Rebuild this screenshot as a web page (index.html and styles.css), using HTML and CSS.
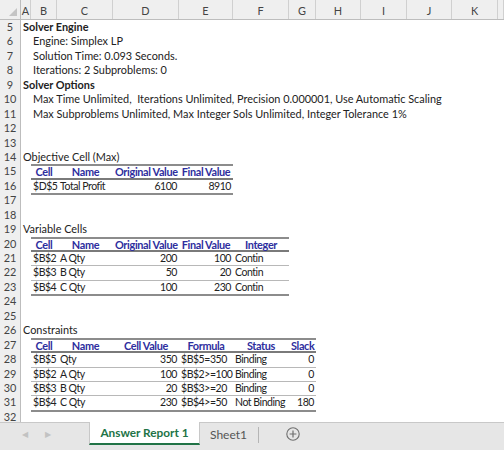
FILE: index.html
```html
<!DOCTYPE html>
<html lang="en">
<head>
  <meta charset="UTF-8">
  <title>Answer Report 1</title>
  <link rel="stylesheet" href="styles.css">
</head>
<body>
  <div class="book">
    <div class="sheet">
      <div class="cols">
        <div class="corner"><span class="tri"></span></div>
        <div class="ch">A</div><div class="ch">B</div><div class="ch">C</div><div class="ch">D</div>
        <div class="ch">E</div><div class="ch">F</div><div class="ch">G</div><div class="ch">H</div>
        <div class="ch">I</div><div class="ch">J</div><div class="ch">K</div><div class="ch"></div>
      </div>

      <div class="row"><div class="rh">5</div><div class="c ca b">Solver Engine</div></div>
      <div class="row"><div class="rh">6</div><div class="c cb">Engine: Simplex LP</div></div>
      <div class="row"><div class="rh">7</div><div class="c cb">Solution Time: 0.093 Seconds.</div></div>
      <div class="row"><div class="rh">8</div><div class="c cb">Iterations: 2 Subproblems: 0</div></div>
      <div class="row"><div class="rh">9</div><div class="c ca b">Solver Options</div></div>
      <div class="row"><div class="rh">10</div><div class="c cb">Max Time Unlimited,  Iterations Unlimited, Precision 0.000001, Use Automatic Scaling</div></div>
      <div class="row"><div class="rh">11</div><div class="c cb">Max Subproblems Unlimited, Max Integer Sols Unlimited, Integer Tolerance 1%</div></div>
      <div class="row"><div class="rh">12</div></div>
      <div class="row"><div class="rh">13</div></div>
      <div class="row"><div class="rh">14</div><div class="c ca">Objective Cell (Max)</div></div>

      <!-- objective table: B..E -->
      <div class="row"><div class="rh">15</div>
        <div class="t th top k2">Cell</div><div class="t th top k3">Name</div>
        <div class="t th top k4">Original Value</div><div class="t th top k5">Final Value</div>
      </div>
      <div class="row"><div class="rh">16</div>
        <div class="t last k2">$D$5</div><div class="t last k3 clip">Total Profit</div>
        <div class="t last k4 num">6100</div><div class="t last k5 num">8910</div>
      </div>

      <div class="row"><div class="rh">17</div></div>
      <div class="row"><div class="rh">18</div></div>
      <div class="row"><div class="rh">19</div><div class="c ca">Variable Cells</div></div>

      <!-- variable cells: B..F -->
      <div class="row"><div class="rh">20</div>
        <div class="t th top k2">Cell</div><div class="t th top k3">Name</div>
        <div class="t th top k4">Original Value</div><div class="t th top k5">Final Value</div>
        <div class="t th top k6">Integer</div>
      </div>
      <div class="row"><div class="rh">21</div>
        <div class="t k2">$B$2</div><div class="t k3">A Qty</div>
        <div class="t k4 num">200</div><div class="t k5 num">100</div><div class="t k6">Contin</div>
      </div>
      <div class="row"><div class="rh">22</div>
        <div class="t k2">$B$3</div><div class="t k3">B Qty</div>
        <div class="t k4 num">50</div><div class="t k5 num">20</div><div class="t k6">Contin</div>
      </div>
      <div class="row"><div class="rh">23</div>
        <div class="t last k2">$B$4</div><div class="t last k3">C Qty</div>
        <div class="t last k4 num">100</div><div class="t last k5 num">230</div><div class="t last k6">Contin</div>
      </div>

      <div class="row"><div class="rh">24</div></div>
      <div class="row"><div class="rh">25</div></div>
      <div class="row"><div class="rh">26</div><div class="c ca">Constraints</div></div>

      <!-- constraints: B..G -->
      <div class="row"><div class="rh">27</div>
        <div class="t th top k2">Cell</div><div class="t th top k3">Name</div>
        <div class="t th top k4">Cell Value</div><div class="t th top k5">Formula</div>
        <div class="t th top k6">Status</div><div class="t th top k7 num">Slack</div>
      </div>
      <div class="row"><div class="rh">28</div>
        <div class="t k2">$B$5</div><div class="t k3">Qty</div>
        <div class="t k4 num">350</div><div class="t k5">$B$5=350</div>
        <div class="t k6">Binding</div><div class="t k7 num">0</div>
      </div>
      <div class="row"><div class="rh">29</div>
        <div class="t k2">$B$2</div><div class="t k3">A Qty</div>
        <div class="t k4 num">100</div><div class="t k5">$B$2&gt;=100</div>
        <div class="t k6">Binding</div><div class="t k7 num">0</div>
      </div>
      <div class="row"><div class="rh">30</div>
        <div class="t k2">$B$3</div><div class="t k3">B Qty</div>
        <div class="t k4 num">20</div><div class="t k5">$B$3&gt;=20</div>
        <div class="t k6">Binding</div><div class="t k7 num">0</div>
      </div>
      <div class="row"><div class="rh">31</div>
        <div class="t last k2">$B$4</div><div class="t last k3">C Qty</div>
        <div class="t last k4 num">230</div><div class="t last k5">$B$4&gt;=50</div>
        <div class="t last k6 clip">Not Binding</div><div class="t last k7 num">180</div>
      </div>

      <div class="row"><div class="rh">32</div></div>
    </div>

    <div class="tabs">
      <div class="nav">
        <span class="arrow">&#9664;</span>
        <span class="arrow">&#9654;</span>
      </div>
      <div class="tab active">Answer Report 1</div>
      <div class="tab">Sheet1</div>
      <div class="sep"></div>
      <div class="add">
        <svg width="14" height="14" viewBox="0 0 14 14">
          <circle cx="7" cy="7" r="6.2" fill="none" stroke="#6f6f6f" stroke-width="1.1"/>
          <path d="M7 3.6v6.8M3.6 7h6.8" stroke="#6f6f6f" stroke-width="1.2"/>
        </svg>
      </div>
    </div>
  </div>
</body>
</html>
```

FILE: styles.css
```css
:root {
  --cols: 21px 10px 26px 56px 66px 54px 56px 27px 45px 46px 45px 46px 1fr;
  --row-h: 14.44px;
  --head-bg: #efefef;
  --head-line: #d0d0d0;
  --head-text: #444;
  --blue: #2e2e9e;
  --rule: #8c8c8c;
  --green: #217346;
}

* {
  box-sizing: border-box;
}

body {
  margin: 0;
  font-family: Lato, "Liberation Sans", sans-serif;
  font-size: 10.9px;
  color: #222;
  background: #fff;
}

.book {
  width: 504px;
  height: 450px;
  display: flex;
  flex-direction: column;
  overflow: hidden;
}

.sheet {
  height: 422px;
  flex-shrink: 0;
  overflow: hidden;
}

.cols {
  display: grid;
  grid-template-columns: var(--cols);
  height: 20px;
  background: var(--head-bg);
  border-bottom: 1px solid #bdbdbd;
}

.corner {
  position: relative;
  border-right: 1px solid #bdbdbd;
}

.tri {
  position: absolute;
  right: 3px;
  bottom: 3px;
  width: 0;
  height: 0;
  border-left: 8px solid transparent;
  border-bottom: 8px solid #c4c4c4;
}

.ch {
  display: flex;
  align-items: center;
  justify-content: center;
  color: var(--head-text);
  border-right: 1px solid var(--head-line);
  font-size: 10.9px;
  padding-top: 1px;
}

.row {
  display: grid;
  grid-template-columns: var(--cols);
  height: var(--row-h);
  line-height: var(--row-h);
  white-space: pre;
}

.rh {
  grid-column: 1;
  text-align: center;
  color: var(--head-text);
  background: var(--head-bg);
  border-right: 1px solid #bdbdbd;
  border-bottom: 1px solid #dedede;
}

.c {
  padding-left: 2px;
}

.ca {
  grid-column: 2 / -1;
}

.cb {
  grid-column: 3 / -1;
}

.b {
  font-weight: bold;
}

/* report tables */
.t {
  padding: 0 2px;
  overflow: visible;
  font-size: 10.5px;
  letter-spacing: -0.45px;
  border-bottom: 1px solid #b8b8b8;
}

.k2 { grid-column: 3; }
.k3 { grid-column: 4; padding-left: 3px; }
.k4 { grid-column: 5; }
.k5 { grid-column: 6; }
.k6 { grid-column: 7; }
.k7 { grid-column: 8; }

.th {
  color: var(--blue);
  font-weight: bold;
  font-size: 10.9px;
  text-align: center;
  letter-spacing: -0.35px;
  border-top: 2px solid var(--rule);
  border-bottom: 2px solid #7a7a7a;
  line-height: 11px;
  padding-top: 0;
}

.th.num {
  text-align: right;
}

.num {
  text-align: right;
}

.last {
  border-bottom: 2px solid var(--rule);
}

.clip {
  overflow: hidden;
}

/* sheet tabs */
.tabs {
  flex: 1;
  display: flex;
  align-items: stretch;
  background: #e6e6e6;
  border-top: 1px solid #c8c8c8;
  padding-bottom: 5px;
  white-space: nowrap;
}

.nav {
  width: 89px;
  display: flex;
  align-items: center;
  gap: 17px;
  padding-left: 22px;
}

.arrow {
  color: #c2c2c2;
  font-size: 8px;
}

.tab {
  display: flex;
  align-items: center;
  padding: 0 9px 0 10px;
  font-size: 12px;
  color: #555;
}

.tab.active {
  width: 111px;
  padding: 0;
  justify-content: center;
  background: #fff;
  color: var(--green);
  font-weight: bold;
  font-size: 11.8px;
  border-left: 1px solid #c8c8c8;
  border-right: 1px solid #c8c8c8;
  border-bottom: 2px solid var(--green);
  margin-top: -1px;
}

.sep {
  width: 1px;
  margin: 4px 0 2px;
  background: #b5b5b5;
  margin-left: 2px;
}

.add {
  display: flex;
  align-items: center;
  padding-left: 27px;
}
```
